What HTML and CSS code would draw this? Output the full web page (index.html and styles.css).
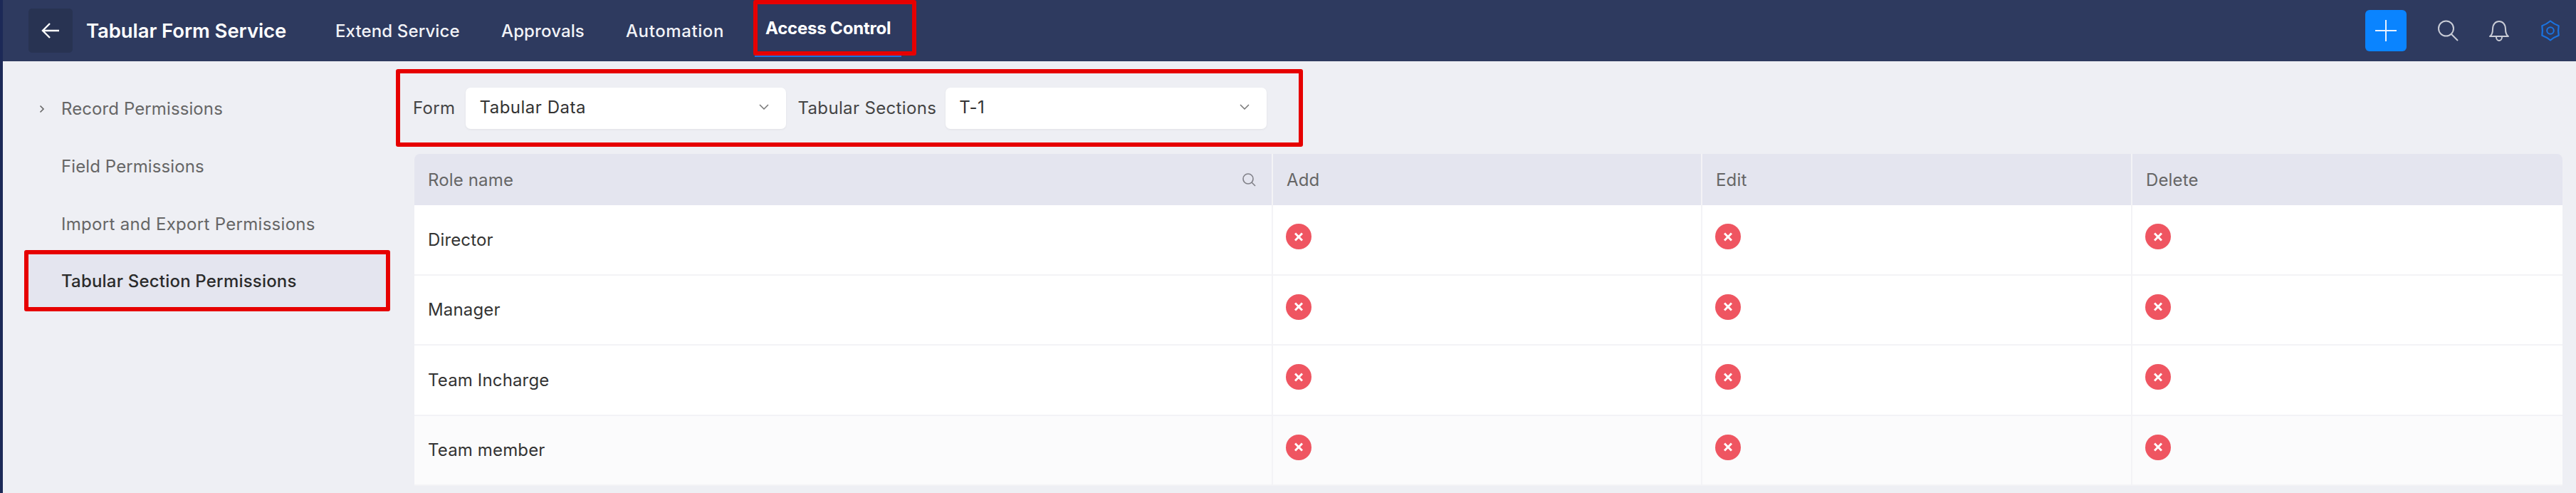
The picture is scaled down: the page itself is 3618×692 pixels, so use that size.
FILE: index.html
```html
<!DOCTYPE html>
<html lang="en">
<head>
<meta charset="utf-8">
<title>Tabular Form Service</title>
<link rel="stylesheet" href="styles.css">
</head>
<body>
<div class="app">
  <header class="topbar">
    <button class="back" aria-label="Back">
      <svg width="26" height="24" viewBox="0 0 26 24"><path d="M25 12H2M12 2 2 12l10 10" fill="none" stroke="#fff" stroke-width="2.4"/></svg>
    </button>
    <h1 class="title">Tabular Form Service</h1>
    <nav class="nav">
      <a class="nav-item nav-extend">Extend Service</a>
      <a class="nav-item nav-approvals">Approvals</a>
      <a class="nav-item nav-automation">Automation</a>
      <a class="nav-item nav-active">Access Control</a>
    </nav>
    <div class="actions">
      <button class="add" aria-label="Add">
        <svg width="30" height="30" viewBox="0 0 30 30"><path d="M15 0v30M0 15h30" stroke="#e8f1ff" stroke-width="2"/></svg>
      </button>
      <svg class="icon icon-search" width="30" height="30" viewBox="0 0 30 30"><circle cx="12.500" cy="12" r="10.500" fill="none" stroke="#c9ccd6" stroke-width="2"/><path d="M20 20l9 9" stroke="#c9ccd6" stroke-width="2"/></svg>
      <svg class="icon icon-bell" width="30" height="30" viewBox="0 0 30 30"><path d="M2 23c3-2 4-5 4-10 0-7 4-11 9-11s9 4 9 11c0 5 1 8 4 10z" fill="none" stroke="#c9ccd6" stroke-width="2" stroke-linejoin="round"/><path d="M11 24c0 3 2 5 4 5s4-2 4-5" fill="none" stroke="#c9ccd6" stroke-width="2"/></svg>
      <svg class="icon icon-gear" width="30" height="30" viewBox="0 0 30 30"><path d="M15 1.500Q20.250 5.900 26.700 8.250 25.500 15 26.700 21.750 20.250 24.100 15 28.500 9.750 24.100 3.300 21.750 4.500 15 3.300 8.250 9.750 5.900 15 1.500z" fill="none" stroke="#1a73e0" stroke-width="2.200" stroke-linejoin="round"/><circle cx="15" cy="15" r="4.800" fill="none" stroke="#1a73e0" stroke-width="2"/></svg>
    </div>
  </header>
  <div class="body">
    <aside class="side">
      <a class="side-item"><svg class="caret" width="8" height="12" viewBox="0 0 8 12"><path d="M1.500 1.500 6 6l-4.500 4.500" fill="none" stroke="#666" stroke-width="1.600"/></svg>Record Permissions</a>
      <a class="side-item">Field Permissions</a>
      <a class="side-item side-wide">Import and Export Permissions</a>
      <a class="side-item side-active">Tabular Section Permissions</a>
    </aside>
    <main class="content">
      <div class="filters">
        <label class="filter-label">Form</label>
        <div class="select select-form"><span>Tabular Data</span><svg width="14" height="8" viewBox="0 0 14 8"><path d="M1 1l6 6 6-6" fill="none" stroke="#777" stroke-width="1.500"/></svg></div>
        <label class="filter-label">Tabular Sections</label>
        <div class="select select-section"><span>T-1</span><svg width="14" height="8" viewBox="0 0 14 8"><path d="M1 1l6 6 6-6" fill="none" stroke="#777" stroke-width="1.500"/></svg></div>
      </div>
      <div class="table">
        <div class="row head">
          <div class="cell cell-role">Role name<svg width="20" height="20" viewBox="0 0 20 20"><circle cx="9" cy="9" r="7" fill="none" stroke="#808088" stroke-width="1.600"/><path d="M14 14l5 5" stroke="#808088" stroke-width="1.600"/></svg></div>
          <div class="cell">Add</div>
          <div class="cell">Edit</div>
          <div class="cell">Delete</div>
        </div>
        <div class="row">
          <div class="cell">Director</div>
          <div class="cell"><span class="deny"></span></div>
          <div class="cell"><span class="deny"></span></div>
          <div class="cell"><span class="deny"></span></div>
        </div>
        <div class="row">
          <div class="cell">Manager</div>
          <div class="cell"><span class="deny"></span></div>
          <div class="cell"><span class="deny"></span></div>
          <div class="cell"><span class="deny"></span></div>
        </div>
        <div class="row">
          <div class="cell">Team Incharge</div>
          <div class="cell"><span class="deny"></span></div>
          <div class="cell"><span class="deny"></span></div>
          <div class="cell"><span class="deny"></span></div>
        </div>
        <div class="row row-hover">
          <div class="cell">Team member</div>
          <div class="cell"><span class="deny"></span></div>
          <div class="cell"><span class="deny"></span></div>
          <div class="cell"><span class="deny"></span></div>
        </div>
      </div>
    </main>
  </div>
</div>
</body>
</html>
```
FILE: styles.css
```css
* { box-sizing: border-box; }
html, body { margin: 0; padding: 0; height: 100%; overflow: hidden; }
body { font-family: Inter, "Liberation Sans", sans-serif; background: #eeeff4; }
.app { height: 692px; border-left: 4px solid #1c2957; display: flex; flex-direction: column; }

.topbar { height: 86px; flex: none; background: #2e3a5f; display: flex; align-items: center; padding-left: 36px; color: #fff; }
.back { width: 62px; height: 62px; flex: none; border: 0; padding: 0; border-radius: 5px; background: #283352; display: flex; align-items: center; justify-content: center; }
.title { margin: 0 0 0 19px; width: 350px; flex: none; font-size: 27.500px; font-weight: 600; letter-spacing: -.08px; white-space: nowrap; }
.nav { display: flex; align-items: center; height: 86px; }
.nav-item { font-size: 24px; font-weight: 500; white-space: nowrap; color: #f2f3f7; letter-spacing: .12px; }
.nav-extend { width: 233px; }
.nav-approvals { width: 175px; }
.nav-automation { width: 179px; letter-spacing: .6px; }
.nav-active { position: relative; width: 229px; height: 78px; margin-top: -8px; padding-left: 11px; border: 6px solid #e60000; border-radius: 3px; display: flex; align-items: center; font-weight: 700; color: #fff; letter-spacing: -.2px; }
.nav-active::after { content: ""; position: absolute; left: -4px; bottom: -8px; width: 206px; height: 2px; background: #1a73e0; }
.actions { margin-left: auto; display: flex; align-items: center; padding-right: 21px; }
.add { width: 58px; height: 58px; border: 0; padding: 0; border-radius: 6px; background: #0a84ff; display: flex; align-items: center; justify-content: center; }
.icon { display: block; }
.icon-search { margin-left: 43px; }
.icon-bell { margin-left: 42px; }
.icon-gear { margin-left: 42px; }

.body { flex: 1; display: flex; min-height: 0; }
.side { width: 552px; flex: none; padding: 26px 0 0 30px; display: flex; flex-direction: column; }
.side-item { position: relative; width: 514px; height: 81px; padding-left: 52px; display: flex; align-items: center; font-size: 24px; letter-spacing: .1px; color: #666; white-space: nowrap; }
.side-wide { letter-spacing: .3px; }
.caret { position: absolute; left: 21px; top: 35px; }
.side-active { height: 86px; margin-top: -4px; padding-left: 46px; border: 6px solid #e60000; border-radius: 3px; background: #e4e5ef; color: #2b2b2b; font-weight: 500; letter-spacing: .2px; }

.content { flex: 1; min-width: 0; padding: 11px 19px 0 0; }
.filters { width: 1274px; height: 109px; padding: 0 0 0 18px; border: 6px solid #e60000; border-radius: 3px; display: flex; align-items: center; }
.filter-label { font-size: 24px; letter-spacing: .35px; color: #444; white-space: nowrap; }
.select { height: 58px; margin: 0 0 0 15px; padding: 0 24px 3px 19px; border-radius: 7px; background: #fff; box-shadow: 0 1px 3px rgba(0,0,0,.06); display: flex; align-items: center; justify-content: space-between; font-size: 24px; letter-spacing: .5px; color: #333; }
.select-form { width: 450px; margin-right: 16px; }
.select-section { width: 451px; margin-left: 13px; }

.table { margin: 10px 0 0 26px; }
.row { display: grid; grid-template-columns: 1206px 603px 604px 1fr; height: 98.5px; background: #fff; border-bottom: 2px solid #f3f3f6; }
.head { height: 72px; background: #e4e5ef; border-bottom: 0; border-radius: 8px 8px 0 0; color: #666; }
.row-hover { background: #fbfbfc; }
.cell { display: flex; align-items: center; padding-left: 19px; font-size: 24px; letter-spacing: .15px; color: #333; border-right: 2px solid #f3f3f6; white-space: nowrap; }
.cell:last-child { border-right: 0; }
.head .cell { color: #666; }
.cell-role { justify-content: space-between; padding-right: 22px; }
.cell .deny { display: block; width: 36px; height: 36px; margin-left: -1px; border-radius: 50%; background: #ef5561; position: relative; margin-bottom: 8px; }
.deny::before, .deny::after { content: ""; position: absolute; left: 11px; top: 16.500px; width: 14px; height: 3px; background: #fff; transform: rotate(45deg); }
.deny::after { transform: rotate(-45deg); }
```
